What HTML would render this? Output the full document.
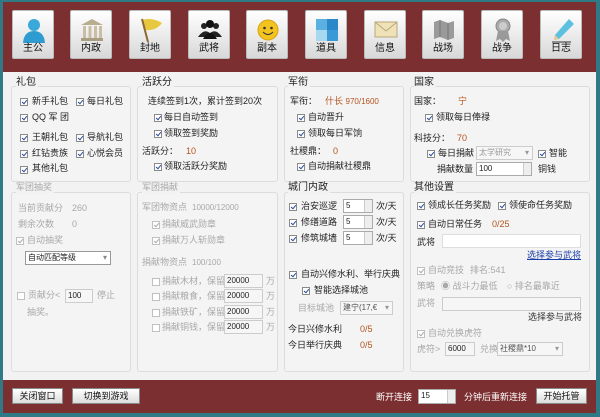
<!DOCTYPE html>
<html><head><meta charset="utf-8"><style>
*{margin:0;padding:0;box-sizing:border-box}
body{width:600px;height:417px;overflow:hidden;background:#2f7a86;font-family:"Liberation Sans","Noto Sans CJK SC",sans-serif;font-size:9px;color:#222;position:relative}
.a{position:absolute;white-space:nowrap;line-height:11px}
#top{position:absolute;left:3px;top:2px;width:593px;height:70px;background:#7b2f30}
#main{position:absolute;left:3px;top:72px;width:593px;height:308px;background:#f2f2f2}
#bot{position:absolute;left:3px;top:380px;width:593px;height:33px;background:#7b2f30}
.btn{position:absolute;top:10px;width:42px;height:49px;background:linear-gradient(#fff,#e8e8e8 60%,#d8d8d8);border:1px solid #bbb;border-radius:2px;text-align:center}
.btn span{position:absolute;left:0;right:0;bottom:4px;font-size:10px;color:#111}
.btn svg{position:absolute;left:8px;top:6px}
.box{position:absolute;border:1px solid #dcdcdc;border-radius:3px;background:#f4f4f4}
.g{color:#a8a8a8}
.o{color:#b5541e}
.cb{position:absolute;width:8px;height:8px;border:1px solid #8a8a8a;background:#fff}
.cb.c::after{content:"";position:absolute;left:2px;top:0px;width:2px;height:4px;border:solid #2a4a9a;border-width:0 1px 1px 0;transform:rotate(40deg)}
.cb.d{border-color:#c0c0c0}.cb.d::after{border-color:#aaa}
.in{position:absolute;background:#fff;border:1px solid #aaa;font-size:8px;line-height:12px;padding-left:2px}
.in.d{border-color:#ccc;background:#f6f6f6}
.sp{position:absolute;width:8px;background:#eee;border-left:1px solid #ccc;right:0;top:0;bottom:0}
.pb{position:absolute;height:16px;background:linear-gradient(#fff,#dcdcdc);border:1px solid #888;font-size:9px;text-align:center;line-height:14px;color:#111}
.tt{background:#f2f2f2;padding-right:2px}
</style></head><body>
<div id="top"></div><div id="main"></div><div id="bot"></div>

<div class="btn" style="left:12px"><svg width="26" height="26"><circle cx="13" cy="8" r="6" fill="#3aa8d8"/><path d="M2 26 Q3 14 13 14 Q23 14 24 26Z" fill="#2e9cd0"/></svg><span>主公</span></div>
<div class="btn" style="left:70px"><svg width="26" height="26"><path d="M2 8 L13 2 L24 8Z" fill="#b9ad90"/><rect x="4" y="9" width="3" height="12" fill="#c9bea3"/><rect x="9.5" y="9" width="3" height="12" fill="#c9bea3"/><rect x="15" y="9" width="3" height="12" fill="#c9bea3"/><rect x="20" y="9" width="3" height="12" fill="#c9bea3"/><rect x="2" y="21" width="22" height="3" fill="#a99e82"/></svg><span>内政</span></div>
<div class="btn" style="left:129px"><svg width="26" height="26"><path d="M4 3 Q14 0 24 6 Q18 14 8 13Z" fill="#e8c840"/><line x1="4" y1="2" x2="10" y2="25" stroke="#8a6a30" stroke-width="2"/></svg><span>封地</span></div>
<div class="btn" style="left:188px"><svg width="26" height="26"><circle cx="7" cy="9" r="3" fill="#222"/><circle cx="19" cy="9" r="3" fill="#222"/><circle cx="13" cy="7" r="4" fill="#111"/><path d="M1 20 Q7 11 13 16 Q19 11 25 20Z" fill="#222"/><path d="M6 22 Q13 10 20 22Z" fill="#111"/></svg><span>武将</span></div>
<div class="btn" style="left:246px"><svg width="26" height="26"><circle cx="13" cy="13" r="10" fill="#f3c420" stroke="#d9a010"/><circle cx="9.5" cy="11" r="1.3" fill="#333"/><circle cx="16.5" cy="11" r="1.3" fill="#333"/><path d="M8 15 Q13 20 18 15" stroke="#333" fill="none"/></svg><span>副本</span></div>
<div class="btn" style="left:305px"><svg width="26" height="26"><rect x="2" y="2" width="11" height="11" fill="#5ab0e0"/><rect x="13" y="2" width="11" height="11" fill="#2a88c8"/><rect x="2" y="13" width="11" height="11" fill="#a8d8f0"/><rect x="13" y="13" width="11" height="11" fill="#3a9ad8"/></svg><span>道具</span></div>
<div class="btn" style="left:364px"><svg width="26" height="26"><rect x="2" y="5" width="22" height="15" fill="#efe2b8" stroke="#b8a878"/><path d="M2 5 L13 14 L24 5" stroke="#b8a878" fill="none"/></svg><span>信息</span></div>
<div class="btn" style="left:422px"><svg width="26" height="26"><path d="M3 5 L9 3 L17 6 L23 4 L23 21 L17 23 L9 20 L3 22Z" fill="#9a9a9a"/><path d="M9 3 V20 M17 6 V23" stroke="#777"/></svg><span>战场</span></div>
<div class="btn" style="left:481px"><svg width="26" height="26"><circle cx="13" cy="9" r="7" fill="#aaa" stroke="#888"/><circle cx="13" cy="9" r="4" fill="#ccc"/><path d="M8 14 L6 24 L10 22 L13 25 L16 22 L20 24 L18 14Z" fill="#999"/></svg><span>战争</span></div>
<div class="btn" style="left:540px"><svg width="26" height="26"><path d="M20 2 L25 7 L10 22 L5 23 L6 18Z" fill="#5cc0e0"/><path d="M6 18 L10 22 L5 23Z" fill="#e8c890"/><line x1="3" y1="25" x2="22" y2="25" stroke="#333"/></svg><span>日志</span></div>

<div class="box" style="left:11px;top:86px;width:120px;height:96px"></div>
<div class="box" style="left:11px;top:192px;width:120px;height:180px"></div>
<div class="box" style="left:137px;top:86px;width:141px;height:96px"></div>
<div class="box" style="left:137px;top:192px;width:141px;height:180px"></div>
<div class="box" style="left:284px;top:86px;width:120px;height:96px"></div>
<div class="box" style="left:284px;top:192px;width:120px;height:180px"></div>
<div class="box" style="left:410px;top:86px;width:180px;height:96px"></div>
<div class="box" style="left:410px;top:192px;width:180px;height:180px"></div>

<!-- col1 -->
<div class="a tt" style="left:16px;top:77px;font-size:10px">礼包</div>
<div class="cb c" style="left:20px;top:98px"></div><div class="a" style="left:32px;top:96px">新手礼包</div>
<div class="cb c" style="left:76px;top:98px"></div><div class="a" style="left:87px;top:96px">每日礼包</div>
<div class="cb c" style="left:20px;top:114px"></div><div class="a" style="left:32px;top:112px">QQ 军 团</div>
<div class="cb c" style="left:20px;top:134px"></div><div class="a" style="left:32px;top:132px">王朝礼包</div>
<div class="cb c" style="left:76px;top:134px"></div><div class="a" style="left:87px;top:132px">导航礼包</div>
<div class="cb c" style="left:20px;top:150px"></div><div class="a" style="left:32px;top:148px">红钻贵族</div>
<div class="cb c" style="left:76px;top:150px"></div><div class="a" style="left:87px;top:148px">心悦会员</div>
<div class="cb c" style="left:20px;top:166px"></div><div class="a" style="left:32px;top:163px">其他礼包</div>

<div class="a g tt" style="left:16px;top:182px">军团抽奖</div>
<div class="a g" style="left:18px;top:203px">当前贡献分</div><div class="a g" style="left:72px;top:203px">260</div>
<div class="a g" style="left:18px;top:219px">剩余次数</div><div class="a g" style="left:72px;top:219px">0</div>
<div class="cb c d" style="left:16px;top:237px"></div><div class="a g" style="left:27px;top:235px">自动抽奖</div>
<div class="in" style="left:25px;top:251px;width:86px;height:14px;border-color:#999">自动匹配等级<span style="position:absolute;right:3px;color:#888">▾</span></div>
<div class="cb d" style="left:17px;top:292px"></div><div class="a g" style="left:28px;top:290px">贡献分&lt;</div>
<div class="in d" style="left:65px;top:289px;width:28px;height:14px">100</div><div class="a g" style="left:97px;top:290px">停止</div>
<div class="a g" style="left:27px;top:307px">抽奖。</div>

<!-- col2 -->
<div class="a tt" style="left:142px;top:77px;font-size:10px">活跃分</div>
<div class="a" style="left:148px;top:96px">连续签到1次，累计签到20次</div>
<div class="cb c" style="left:154px;top:114px"></div><div class="a" style="left:164px;top:112px">每日自动签到</div>
<div class="cb c" style="left:154px;top:130px"></div><div class="a" style="left:164px;top:128px">领取签到奖励</div>
<div class="a" style="left:142px;top:146px">活跃分：</div><div class="a o" style="left:186px;top:146px">10</div>
<div class="cb c" style="left:154px;top:163px"></div><div class="a" style="left:164px;top:161px">领取活跃分奖励</div>

<div class="a g tt" style="left:142px;top:182px">军团捐献</div>
<div class="a g" style="left:142px;top:202px">军团物资点</div><div class="a g" style="left:192px;top:202px;font-size:8px">10000/12000</div>
<div class="cb c d" style="left:152px;top:221px"></div><div class="a g" style="left:162px;top:219px">捐献威武勋章</div>
<div class="cb c d" style="left:152px;top:237px"></div><div class="a g" style="left:162px;top:235px">捐献万人斩勋章</div>
<div class="a g" style="left:142px;top:257px">捐献物资点</div><div class="a g" style="left:192px;top:257px;font-size:8px">100/100</div>
<div class="cb d" style="left:152px;top:278px"></div><div class="a g" style="left:162px;top:276px">捐献木材，保留</div><div class="in d" style="left:224px;top:274px;width:39px;height:14px">20000</div><div class="a g" style="left:266px;top:276px">万</div>
<div class="cb d" style="left:152px;top:293px"></div><div class="a g" style="left:162px;top:291px">捐献粮食，保留</div><div class="in d" style="left:224px;top:289px;width:39px;height:14px">20000</div><div class="a g" style="left:266px;top:291px">万</div>
<div class="cb d" style="left:152px;top:309px"></div><div class="a g" style="left:162px;top:307px">捐献铁矿，保留</div><div class="in d" style="left:224px;top:305px;width:39px;height:14px">20000</div><div class="a g" style="left:266px;top:307px">万</div>
<div class="cb d" style="left:152px;top:324px"></div><div class="a g" style="left:162px;top:322px">捐献铜钱，保留</div><div class="in d" style="left:224px;top:320px;width:39px;height:14px">20000</div><div class="a g" style="left:266px;top:322px">万</div>

<!-- col3 -->
<div class="a tt" style="left:288px;top:77px;font-size:10px">军衔</div>
<div class="a" style="left:290px;top:96px">军衔：</div><div class="a o" style="left:325px;top:96px">什长 <span style="font-size:8px">970/1600</span></div>
<div class="cb c" style="left:297px;top:114px"></div><div class="a" style="left:308px;top:112px">自动晋升</div>
<div class="cb c" style="left:297px;top:130px"></div><div class="a" style="left:308px;top:128px">领取每日军饷</div>
<div class="a" style="left:290px;top:146px">社稷鼎：</div><div class="a o" style="left:333px;top:146px">0</div>
<div class="cb c" style="left:297px;top:163px"></div><div class="a" style="left:308px;top:161px">自动捐献社稷鼎</div>

<div class="a tt" style="left:288px;top:182px;font-size:10px">城门内政</div>
<div class="cb c" style="left:289px;top:203px"></div><div class="a" style="left:301px;top:201px">治安巡逻</div><div class="in" style="left:343px;top:199px;width:30px;height:14px">5<div class="sp"></div></div><div class="a" style="left:376px;top:201px">次/天</div>
<div class="cb c" style="left:289px;top:219px"></div><div class="a" style="left:301px;top:217px">修缮道路</div><div class="in" style="left:343px;top:215px;width:30px;height:14px">5<div class="sp"></div></div><div class="a" style="left:376px;top:217px">次/天</div>
<div class="cb c" style="left:289px;top:235px"></div><div class="a" style="left:301px;top:233px">修筑城墙</div><div class="in" style="left:343px;top:231px;width:30px;height:14px">5<div class="sp"></div></div><div class="a" style="left:376px;top:233px">次/天</div>
<div class="cb c" style="left:289px;top:271px"></div><div class="a" style="left:301px;top:269px">自动兴修水利、举行庆典</div>
<div class="cb c" style="left:302px;top:287px"></div><div class="a" style="left:314px;top:285px">智能选择城池</div>
<div class="a g" style="left:298px;top:303px">目标城池</div><div class="in d" style="left:340px;top:301px;width:53px;height:14px;color:#555">建宁(17,€<span style="position:absolute;right:3px;color:#999">▾</span></div>
<div class="a" style="left:288px;top:324px">今日兴修水利</div><div class="a o" style="left:360px;top:324px">0/5</div>
<div class="a" style="left:288px;top:340px">今日举行庆典</div><div class="a o" style="left:360px;top:340px">0/5</div>

<!-- col4 -->
<div class="a tt" style="left:414px;top:77px;font-size:10px">国家</div>
<div class="a" style="left:414px;top:96px">国家：</div><div class="a o" style="left:458px;top:96px">宁</div>
<div class="cb c" style="left:425px;top:114px"></div><div class="a" style="left:436px;top:112px">领取每日俸禄</div>
<div class="a" style="left:414px;top:133px">科技分：</div><div class="a o" style="left:457px;top:133px">70</div>
<div class="cb c" style="left:427px;top:150px"></div><div class="a" style="left:438px;top:148px">每日捐献</div>
<div class="in d" style="left:476px;top:146px;width:57px;height:14px;color:#999">太学研究<span style="position:absolute;right:3px">▾</span></div>
<div class="cb c" style="left:538px;top:150px"></div><div class="a" style="left:549px;top:148px">智能</div>
<div class="a" style="left:437px;top:164px">捐献数量</div><div class="in" style="left:476px;top:162px;width:56px;height:14px">100<div class="sp"></div></div><div class="a" style="left:538px;top:164px">铜钱</div>

<div class="a tt" style="left:414px;top:182px;font-size:10px">其他设置</div>
<div class="cb c" style="left:417px;top:202px"></div><div class="a" style="left:428px;top:200px">领成长任务奖励</div>
<div class="cb c" style="left:498px;top:202px"></div><div class="a" style="left:509px;top:200px">领使命任务奖励</div>
<div class="cb c" style="left:417px;top:221px"></div><div class="a" style="left:428px;top:219px">自动日常任务</div><div class="a o" style="left:492px;top:219px">0/25</div>
<div class="a" style="left:417px;top:237px">武将</div><div class="in" style="left:442px;top:234px;width:139px;height:14px;border-color:#ddd"></div>
<div class="a" style="left:527px;top:250px;color:#1a3ea8;text-decoration:underline">选择参与武将</div>
<div class="cb c d" style="left:417px;top:267px"></div><div class="a g" style="left:428px;top:265px">自动竞技</div><div class="a g" style="left:470px;top:265px">排名:541</div>
<div class="a g" style="left:417px;top:281px">策略</div>
<div class="a g" style="left:441px;top:281px">◉ 战斗力最低</div><div class="a g" style="left:507px;top:281px">○ 排名最靠近</div>
<div class="a g" style="left:417px;top:298px">武将</div><div class="in d" style="left:442px;top:297px;width:139px;height:14px"></div>
<div class="a" style="left:528px;top:312px;color:#333">选择参与武将</div>
<div class="cb c d" style="left:417px;top:330px"></div><div class="a g" style="left:428px;top:328px">自动兑换虎符</div>
<div class="a g" style="left:417px;top:344px">虎符&gt;</div><div class="in d" style="left:445px;top:342px;width:30px;height:14px">6000</div>
<div class="a g" style="left:480px;top:344px">兑换</div><div class="in d" style="left:497px;top:342px;width:66px;height:14px;color:#555">社稷鼎*10<span style="position:absolute;right:3px;color:#999">▾</span></div>

<!-- bottom -->
<div class="pb" style="left:12px;top:388px;width:51px">关闭窗口</div>
<div class="pb" style="left:72px;top:388px;width:68px">切换到游戏</div>
<div class="a" style="left:376px;top:392px;color:#fff">断开连接</div>
<div class="in" style="left:418px;top:389px;width:38px;height:15px">15<div class="sp"></div></div>
<div class="a" style="left:464px;top:392px;color:#fff">分钟后重新连接</div>
<div class="pb" style="left:536px;top:388px;width:51px">开始托管</div>
</body></html>
